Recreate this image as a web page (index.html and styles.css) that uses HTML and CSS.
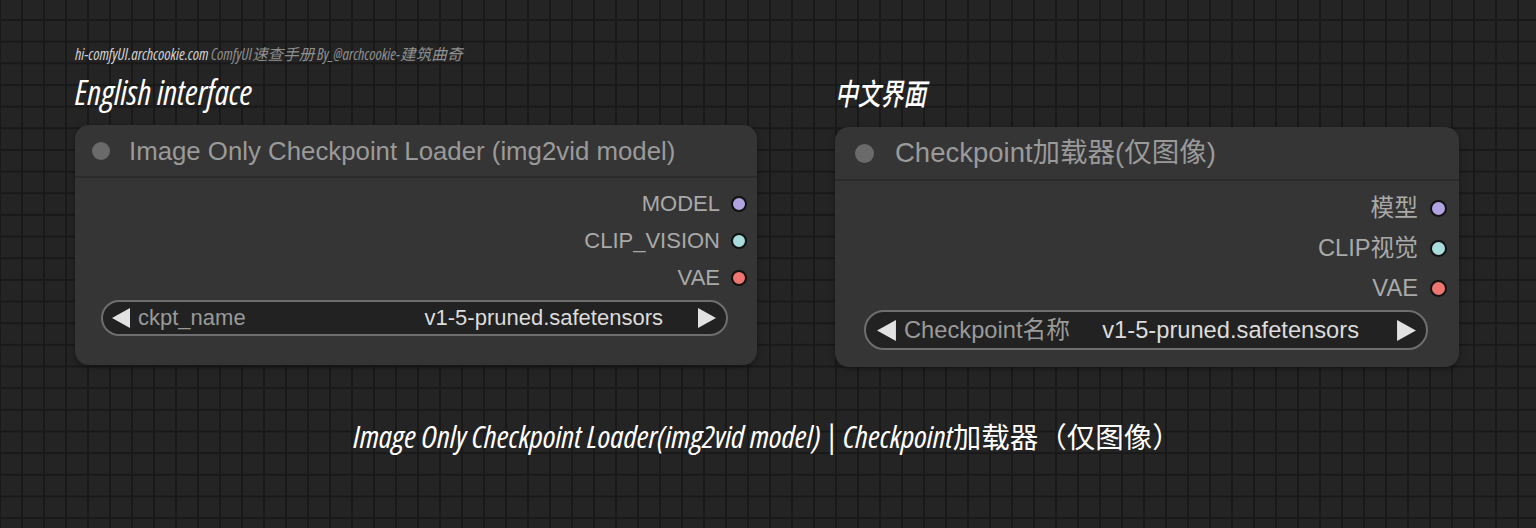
FILE: index.html
```html
<!DOCTYPE html>
<html lang="zh">
<head>
    <meta charset="UTF-8">
    <meta name="viewport" content="width=device-width, initial-scale=1.0">
    <title>Image Only Checkpoint Loader</title>
    <link rel="stylesheet" href="styles.css">
</head>
<body>
    <div class="page">
        <div class="credit"><span class="site">hi-comfyUI.archcookie.com</span> ComfyUI速查手册 By_@archcookie-建筑曲奇</div>

        <div class="columns">
            <section class="col">
                <h2 class="label label-en">English interface</h2>
                <div class="node node-en">
                    <div class="node-title">
                        <span class="title-dot"></span>
                        <span>Image Only Checkpoint Loader (img2vid model)</span>
                    </div>
                    <div class="node-body">
                        <div class="output">MODEL <span class="slot slot-model"></span></div>
                        <div class="output">CLIP_VISION <span class="slot slot-clip"></span></div>
                        <div class="output">VAE <span class="slot slot-vae"></span></div>
                        <div class="widget">
                            <svg class="arrow" viewBox="0 0 18 20"><polygon points="18,0 18,20 0,10"/></svg>
                            <span class="widget-name">ckpt_name</span>
                            <span class="widget-value">v1-5-pruned.safetensors</span>
                            <svg class="arrow arrow-right" viewBox="0 0 18 20"><polygon points="0,0 18,10 0,20"/></svg>
                        </div>
                    </div>
                </div>
            </section>

            <section class="col">
                <h2 class="label label-zh">中文界面</h2>
                <div class="node node-zh">
                    <div class="node-title">
                        <span class="title-dot"></span>
                        <span>Checkpoint加载器(仅图像)</span>
                    </div>
                    <div class="node-body">
                        <div class="output">模型 <span class="slot slot-model"></span></div>
                        <div class="output">CLIP视觉 <span class="slot slot-clip"></span></div>
                        <div class="output">VAE <span class="slot slot-vae"></span></div>
                        <div class="widget">
                            <svg class="arrow" viewBox="0 0 18 20"><polygon points="18,0 18,20 0,10"/></svg>
                            <span class="widget-name">Checkpoint名称</span>
                            <span class="widget-value">v1-5-pruned.safetensors</span>
                            <svg class="arrow arrow-right" viewBox="0 0 18 20"><polygon points="0,0 18,10 0,20"/></svg>
                        </div>
                    </div>
                </div>
            </section>
        </div>

        <p class="caption">Image Only Checkpoint Loader(img2vid model) | Checkpoint<span class="cjk">加载器（仅图像）</span></p>
    </div>
</body>
</html>
```

FILE: styles.css
```css
html, body {
    margin: 0;
    padding: 0;
}
body {
    width: 1536px;
    height: 528px;
    overflow: hidden;
    background-color: #242424;
    background-image:
        linear-gradient(#191919 2px, transparent 2px),
        linear-gradient(90deg, #191919 2px, transparent 2px);
    background-size: 22px 21.67px;
    background-position: 21px 19px;
    font-family: "Liberation Sans", "Noto Sans CJK SC", sans-serif;
}
.page {
    width: fit-content;
    padding: 46px 0 0 75px;
}

/* annotations */
.credit,
.label,
.caption {
    font-family: "Open Sans", "Noto Sans CJK SC", sans-serif;
    font-stretch: 75%;
    font-style: italic;
}
.credit {
    font-size: 15.6px;
    line-height: 16px;
    color: #8f8f8f;
}
.credit .site {
    color: #d2d2d2;
}
.columns {
    display: flex;
    gap: 78px;
    margin-top: 12px;
}
.label {
    margin: 0 0 15px;
    font-size: 34px;
    line-height: 36px;
    font-weight: 500;
    color: #fff;
}
.label-zh {
    font-family: "Noto Sans CJK SC", sans-serif;
    font-size: 30px;
    margin-bottom: 17px;
    transform: scaleX(0.76);
    transform-origin: left center;
}
.caption {
    margin: 49px 0 0;
    text-align: center;
    font-size: 31.7px;
    line-height: 40px;
    font-weight: 500;
    color: #fff;
}
.caption .cjk {
    font-family: "Noto Sans CJK SC", sans-serif;
    font-style: normal;
    font-weight: normal;
    font-size: 28.5px;
}

/* nodes */
.node {
    background: #353535;
    border-radius: 14px;
    box-shadow: 0 2px 6px rgba(0, 0, 0, 0.35);
}
.node-title {
    display: flex;
    align-items: center;
    border-bottom: 2px solid #2b2b2b;
    color: #9a9a9a;
    white-space: nowrap;
    line-height: 30px;
}
.title-dot {
    flex: none;
    border-radius: 50%;
    background: #6a6a6a;
}
.output {
    display: flex;
    justify-content: flex-end;
    align-items: center;
    color: #a9a9a9;
    line-height: 26px;
}
.slot {
    flex: none;
    border-radius: 50%;
    border: 2px solid #111;
    box-sizing: border-box;
}
.slot-model { background: #b1a2e0; }
.slot-clip { background: #a9dcdc; }
.slot-vae { background: #ee7670; }
.widget {
    display: flex;
    align-items: center;
    box-sizing: border-box;
    background: #222;
    border: 2px solid #6e6e6e;
    white-space: nowrap;
    line-height: 26px;
}
.arrow {
    flex: none;
    fill: #e2e2e2;
}
.widget-name {
    color: #9a9a9a;
}
.widget-value {
    margin-left: auto;
    color: #dcdcdc;
}

/* english node */
.node-en {
    width: 682px;
}
.node-en .node-title {
    height: 51px;
    padding-left: 17px;
    gap: 19px;
    font-size: 25.8px;
}
.node-en .title-dot {
    width: 18px;
    height: 18px;
}
.node-en .node-body {
    padding: 7px 10px 29px 0;
}
.node-en .output {
    height: 37px;
    gap: 11px;
    font-size: 22px;
}
.node-en .slot {
    width: 16px;
    height: 16px;
}
.node-en .widget {
    height: 36px;
    margin: 4px 19px 0 26px;
    padding: 0 10px 0 9px;
    border-radius: 18px;
    font-size: 22px;
}
.node-en .arrow {
    width: 18px;
    height: 20px;
}
.node-en .widget-name {
    margin-left: 8px;
}
.node-en .arrow-right {
    margin-left: 35px;
}

/* chinese node */
.node-zh {
    width: 624px;
}
.node-zh .node-title {
    height: 52px;
    padding-left: 20px;
    gap: 21px;
    font-size: 27.5px;
}
.node-zh .title-dot {
    width: 19px;
    height: 19px;
}
.node-zh .node-body {
    padding: 7px 12px 17px 0;
}
.node-zh .output {
    height: 40px;
    gap: 12px;
    font-size: 23.7px;
}
.node-zh .slot {
    width: 17px;
    height: 17px;
}
.node-zh .widget {
    height: 40px;
    margin: 2px 19px 0 29px;
    padding: 0 10px 0 11px;
    border-radius: 20px;
    font-size: 23.7px;
}
.node-zh .arrow {
    width: 19px;
    height: 21px;
}
.node-zh .widget-name {
    margin-left: 8px;
}
.node-zh .arrow-right {
    margin-left: 38px;
}
```
